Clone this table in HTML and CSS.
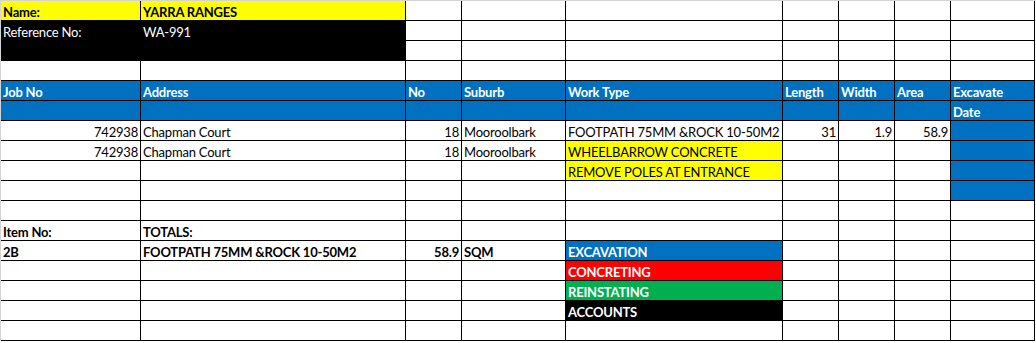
FILE: index.html
```html
<!DOCTYPE html>
<html>
<head>
<meta charset="utf-8">
<title>Job Sheet</title>
<link rel="stylesheet" href="styles.css">
</head>
<body>
<div class="sheet">
  <!-- row 1 -->
  <div class="c y b">Name:</div><div class="c y b">YARRA RANGES</div><div class="c"></div><div class="c"></div><div class="c"></div><div class="c"></div><div class="c"></div><div class="c"></div><div class="c"></div>
  <!-- row 2 -->
  <div class="c k">Reference No:</div><div class="c k">WA-991</div><div class="c"></div><div class="c"></div><div class="c"></div><div class="c"></div><div class="c"></div><div class="c"></div><div class="c"></div>
  <!-- row 3 -->
  <div class="c k"></div><div class="c k"></div><div class="c"></div><div class="c"></div><div class="c"></div><div class="c"></div><div class="c"></div><div class="c"></div><div class="c"></div>
  <!-- row 4 -->
  <div class="c"></div><div class="c"></div><div class="c"></div><div class="c"></div><div class="c"></div><div class="c"></div><div class="c"></div><div class="c"></div><div class="c"></div>
  <!-- row 5 -->
  <div class="c bl">Job No</div><div class="c bl">Address</div><div class="c bl">No</div><div class="c bl">Suburb</div><div class="c bl">Work Type</div><div class="c bl">Length</div><div class="c bl">Width</div><div class="c bl">Area</div><div class="c bl">Excavate</div>
  <!-- row 6 -->
  <div class="c bl"></div><div class="c bl"></div><div class="c bl"></div><div class="c bl"></div><div class="c bl"></div><div class="c bl"></div><div class="c bl"></div><div class="c bl"></div><div class="c bl">Date</div>
  <!-- row 7 -->
  <div class="c r">742938</div><div class="c">Chapman Court</div><div class="c r">18</div><div class="c">Mooroolbark</div><div class="c">FOOTPATH 75MM &amp;ROCK 10-50M2</div><div class="c r">31</div><div class="c r">1.9</div><div class="c r">58.9</div><div class="c bl"></div>
  <!-- row 8 -->
  <div class="c r">742938</div><div class="c">Chapman Court</div><div class="c r">18</div><div class="c">Mooroolbark</div><div class="c y">WHEELBARROW CONCRETE</div><div class="c"></div><div class="c"></div><div class="c"></div><div class="c bl"></div>
  <!-- row 9 -->
  <div class="c"></div><div class="c"></div><div class="c"></div><div class="c"></div><div class="c y">REMOVE POLES AT ENTRANCE</div><div class="c"></div><div class="c"></div><div class="c"></div><div class="c bl"></div>
  <!-- row 10 -->
  <div class="c"></div><div class="c"></div><div class="c"></div><div class="c"></div><div class="c"></div><div class="c"></div><div class="c"></div><div class="c"></div><div class="c bl"></div>
  <!-- row 11 -->
  <div class="c"></div><div class="c"></div><div class="c"></div><div class="c"></div><div class="c"></div><div class="c"></div><div class="c"></div><div class="c"></div><div class="c"></div>
  <!-- row 12 -->
  <div class="c b">Item No:</div><div class="c b">TOTALS:</div><div class="c"></div><div class="c"></div><div class="c"></div><div class="c"></div><div class="c"></div><div class="c"></div><div class="c"></div>
  <!-- row 13 -->
  <div class="c b">2B</div><div class="c b">FOOTPATH 75MM &amp;ROCK 10-50M2</div><div class="c b r">58.9</div><div class="c b">SQM</div><div class="c bl">EXCAVATION</div><div class="c"></div><div class="c"></div><div class="c"></div><div class="c"></div>
  <!-- row 14 -->
  <div class="c"></div><div class="c"></div><div class="c"></div><div class="c"></div><div class="c rd">CONCRETING</div><div class="c"></div><div class="c"></div><div class="c"></div><div class="c"></div>
  <!-- row 15 -->
  <div class="c"></div><div class="c"></div><div class="c"></div><div class="c"></div><div class="c gr">REINSTATING</div><div class="c"></div><div class="c"></div><div class="c"></div><div class="c"></div>
  <!-- row 16 -->
  <div class="c"></div><div class="c"></div><div class="c"></div><div class="c"></div><div class="c k b">ACCOUNTS</div><div class="c"></div><div class="c"></div><div class="c"></div><div class="c"></div>
  <!-- row 17 -->
  <div class="c"></div><div class="c"></div><div class="c"></div><div class="c"></div><div class="c"></div><div class="c"></div><div class="c"></div><div class="c"></div><div class="c"></div>
</div>
</body>
</html>
```
FILE: styles.css
```css
* { box-sizing: border-box; }
html, body { margin: 0; padding: 0; background: #fff; }
body { font-family: Lato, "Open Sans", sans-serif; font-size: 13px; letter-spacing: -0.2px; color: #000; }
.sheet {
  display: grid;
  grid-template-columns: 140px 265px 56px 104px 217px 56px 56px 56px 84px;
  grid-auto-rows: 20px;
  width: 1035px;
  border-top: 1px solid #d4d4d4;
  border-left: 1px solid #d4d4d4;
}
.c {
  border-right: 1px solid #000;
  border-bottom: 1px solid #000;
  padding: 2px 2px 0 2px;
  line-height: 18px;
  white-space: nowrap;
  overflow: hidden;
}
.r { text-align: right; }
.b { font-weight: bold; }
.y { background: #ffff00; }
.k { background: #000; color: #fff; }
.bl { background: #0070c0; color: #fff; font-weight: bold; }
.rd { background: #ff0000; color: #fff; font-weight: bold; }
.gr { background: #00b050; color: #fff; font-weight: bold; }
```
